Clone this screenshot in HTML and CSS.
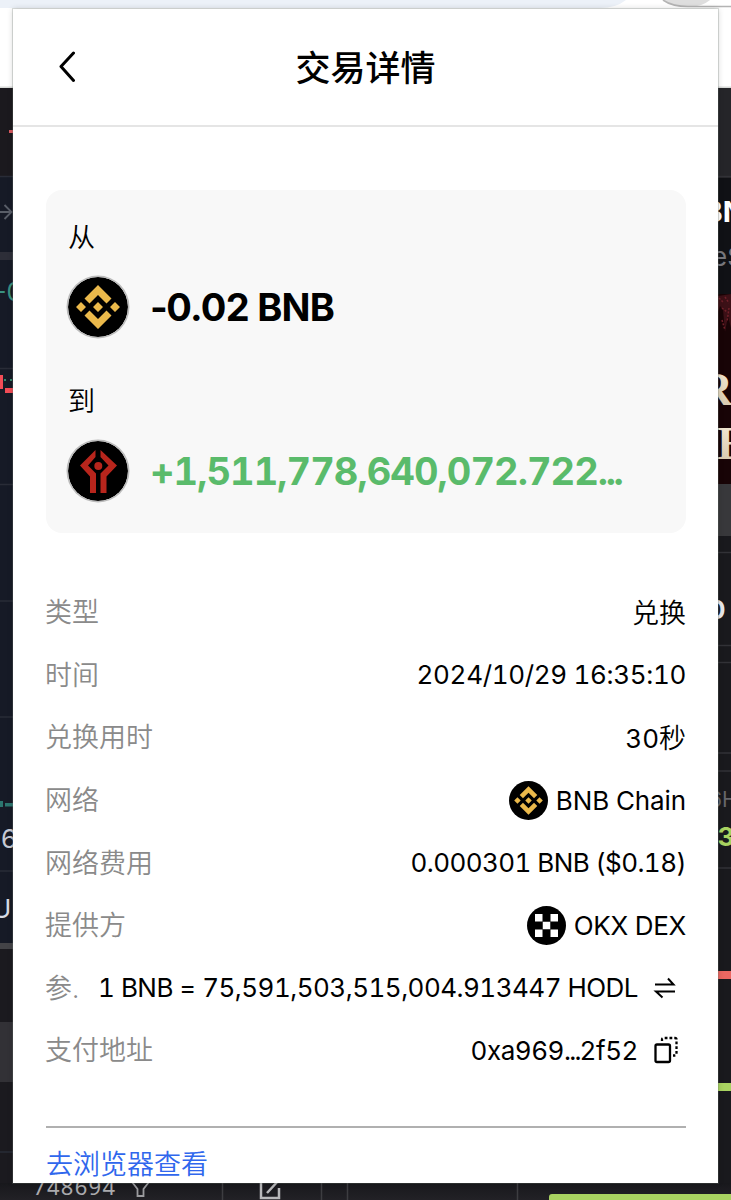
FILE: index.html
```html
<!DOCTYPE html>
<html lang="zh-CN">
<head>
<meta charset="utf-8">
<title>交易详情</title>
<link rel="stylesheet" href="styles.css">
</head>
<body>
<svg class="backdrop" width="731" height="1200" viewBox="0 0 731 1200" aria-hidden="true">
  <defs>
    <linearGradient id="bottom" x1="0" y1="0" x2="0" y2="1"><stop offset="0" stop-color="#18181c"/><stop offset="1" stop-color="#222126"/></linearGradient>
    <linearGradient id="cream" x1="0" y1="0" x2="0" y2="1"><stop offset="0" stop-color="#f7edd8"/><stop offset="1" stop-color="#d3c4a8"/></linearGradient>
  </defs>
  <rect width="731" height="88" fill="#fff"/>
  <path d="M0 0H626Q616 8 600 8H0Z" fill="#ecf1f8"/>
  <path d="M663 0Q672 7 688 7Q702 7 710 0Z" fill="#dedede"/>
  <path d="M663 0Q672 6.5 688 6.5H731" fill="none" stroke="#b4b4b4" stroke-width="1.6"/>
  <rect y="86.500" width="731" height="1.500" fill="#d8dad8"/>
  <rect y="88" width="731" height="1112" fill="#19191d"/>
  <g>
    <rect y="88" width="13" height="89" fill="#1b191e"/>
    <rect y="177" width="13" height="768" fill="#161a26"/>
    <rect y="948" width="13" height="252" fill="#1b1a1f"/>
    <path d="M0 176.500H13M0 368.500H13M0 484.500H13M0 601H13M0 717H13M0 871H13M0 1152H13" stroke="#292c37" stroke-width="1.500"/>
    <rect y="252" width="13" height="8" fill="#2d2e38"/>
    <rect y="943" width="13" height="6" fill="#434347"/>
    <rect y="1022" width="13" height="60" fill="#323136"/>
    <rect x="9" y="130" width="4" height="3" fill="#d9585f"/>
    <path d="M0 212H11M4.500 205L11.500 212L4.500 219" fill="none" stroke="#595e68" stroke-width="1.800"/>
    <text x="-5" y="301" font-size="25" fill="#399181">-0</text>
    <path d="M0 375H3V389H0ZM5 388H13V393H5Z" fill="#f34c56"/>
    <path d="M4 380H6M10 380H12" stroke="#3fae83" stroke-width="1.500"/>
    <path d="M0 801H3V807H0ZM5 803H13V806.500H5Z" fill="#2c766f"/>
    <text x="1" y="848" font-size="26" fill="#c6c9d3">6</text>
    <text x="-8" y="918" font-size="26" fill="#d8dbe4">U</text>
  </g>
  <g>
    <rect x="718" y="88" width="13" height="90" fill="#252529"/>
    <rect x="718" y="178" width="13" height="116" fill="#101115"/>
    <rect x="718" y="294" width="13" height="190" fill="#180406"/>
    <path d="M718 296L731 294V328L728 316L725 332L723 310L720 306L718 312Z" fill="#3c1016"/>
    <path d="M719 298L723 302M725 297L729 303M722 308L727 312M729 308L727 322M722 320L725 330" stroke="#702029" stroke-width="1.500" stroke-dasharray="2 1.500"/>
    <rect x="718" y="484" width="13" height="52" fill="#38383b"/>
    <path d="M718 176.500H731M718 552.500H731M718 645.500H731M718 662.500H731M718 753H731M718 771H731M718 868H731" stroke="#323237" stroke-width="1.500"/>
    <text x="703.500" y="222" font-size="29" font-weight="700" fill="#fff">BN</text>
    <text x="712" y="266" font-size="26" fill="#77777c">eS</text>
    <text class="poster" x="699" y="405" font-size="47" font-weight="700" fill="url(#cream)">R</text>
    <text class="poster" x="717" y="459" font-size="47" font-weight="700" fill="url(#cream)">E</text>
    <text x="708" y="619" font-size="26" font-weight="700" fill="#e8e8ec">0</text>
    <text x="709" y="807" font-size="21" fill="#66666b">6H</text>
    <text x="717.500" y="846" font-size="26" font-weight="700" fill="#a9d361">3</text>
    <rect x="718" y="971" width="13" height="8" fill="#ec6762"/>
    <rect x="718" y="1083" width="13" height="8" fill="#a9d361"/>
  </g>
  <rect y="1183" width="731" height="17" fill="url(#bottom)"/>
  <path d="M222.500 1183V1200M321.500 1183V1200M347.500 1183V1200M517.500 1183V1200" stroke="#3d3d41" stroke-width="1.500"/>
  <text class="mono" x="33" y="1195" font-size="22" textLength="82" fill="#aaaaad">748694</text>
  <path d="M132 1182L137.500 1189V1196H143.500V1189L149 1182" fill="none" stroke="#9b9b9e" stroke-width="1.800"/>
  <path d="M261 1180V1198H279V1188M267 1193L279 1180" fill="none" stroke="#b8b8ba" stroke-width="2.500"/>
  <path d="M549 1200V1197Q549 1194 552 1194H731V1200Z" fill="#a9d361"/>
</svg>

<svg class="symbols" width="0" height="0" aria-hidden="true">
  <symbol id="bnb" viewBox="0 0 60 60">
    <circle cx="30" cy="30" r="30" fill="#000"/>
    <path d="M30 8L43.500 21.500L38.500 26.500L30 18L21.500 26.500L16.500 21.500ZM30 52L43.500 38.500L38.500 33.500L30 42L21.500 33.500L16.500 38.500ZM30 25L35 30L30 35L25 30ZM13 25L18 30L13 35L8 30ZM47 25L52 30L47 35L42 30Z" fill="#ebb94b"/>
  </symbol>
</svg>

<main class="popup">
  <header class="header">
    <svg class="back" width="16" height="32" viewBox="0 0 16 32"><path d="M14.500 2L2 15.500L14.500 29.500" fill="none" stroke="#000" stroke-width="3" stroke-linecap="round" stroke-linejoin="round"/></svg>
    <h1 class="title">交易详情</h1>
  </header>

  <section class="swap">
    <div class="leg">
      <div class="leg-label">从</div>
      <div class="leg-value"><svg class="token"><use href="#bnb"/></svg><span class="amount spent"><span class="minus">-</span>0.02 BNB</span></div>
    </div>
    <div class="leg">
      <div class="leg-label">到</div>
      <div class="leg-value">
        <svg class="token" viewBox="0 0 60 60"><circle cx="30" cy="30" r="30" fill="#000"/><path d="M27.500 9L12 24.500L22 35.500V52H28V32.500L20 24.500L27.500 16ZM32.500 9L49 24.500L38.500 35.500V52H32.500V32.500L40.500 24.500L32.500 16Z" fill="#b8251c"/><circle cx="30.300" cy="25" r="4" fill="#b8251c"/></svg>
        <span class="amount received">+1,511,778,640,072.722<span class="dots">...</span></span>
      </div>
    </div>
  </section>

  <dl class="details">
    <div class="row"><dt>类型</dt><dd class="cjk">兑换</dd></div>
    <div class="row"><dt>时间</dt><dd><span class="time">2024/10/29 16:35:10</span></dd></div>
    <div class="row"><dt>兑换用时</dt><dd class="cjk"><span><span class="seconds">30</span>秒</span></dd></div>
    <div class="row"><dt>网络</dt><dd><svg class="logo"><use href="#bnb"/></svg><span class="chain">BNB Chain</span></dd></div>
    <div class="row"><dt>网络费用</dt><dd><span class="fee">0.000301 BNB ($0.18)</span></dd></div>
    <div class="row"><dt>提供方</dt><dd>
      <svg class="logo" viewBox="0 0 39 39"><circle cx="19.500" cy="19.500" r="19.500" fill="#000"/><path d="M8 8H15.500V15.500H8ZM23.500 8H31V15.500H23.500ZM15.750 15.750H23.250V23.250H15.750ZM8 23.500H15.500V31H8ZM23.500 23.500H31V31H23.500Z" fill="#fff"/></svg>
      <span class="dex">OKX DEX</span></dd></div>
    <div class="row"><dt>参.</dt><dd><span class="rate">1 BNB = 75,591,503,515,004.913447 HODL</span>
      <svg class="action" width="28" height="28" viewBox="0 0 28 28"><path d="M3 10.500H21.500L16 4.500M23 17.500H4L10.500 23.500" fill="none" stroke="#000" stroke-width="2"/></svg></dd></div>
    <div class="row"><dt>支付地址</dt><dd><span class="address">0xa969<span class="dots">...</span>2f52</span>
      <svg class="action" width="28" height="28" viewBox="0 0 28 28"><rect x="3.500" y="8.500" width="14.500" height="17.500" rx="1.500" fill="none" stroke="#000" stroke-width="2.300"/><path d="M10 5V3.500Q10 2 11.500 2H23Q24.500 2 24.500 3.500V18Q24.500 19.500 23 19.500H21" fill="none" stroke="#000" stroke-width="2.300" stroke-dasharray="2.800 2"/></svg></dd></div>
  </dl>
  <footer class="footer"><a class="explorer">去浏览器查看</a></footer>
</main>
</body>
</html>
```
FILE: styles.css
```css
* { box-sizing: border-box; }
body {
  margin: 0;
  height: 1200px;
  overflow: hidden;
  padding: 9px 13px 17px;
  font-family: Inter, "Noto Sans CJK SC", sans-serif;
  color: #000;
}
.backdrop { position: absolute; inset: 0; z-index: -1; }
.poster { font-family: "Liberation Serif", serif; }
.mono { font-family: "Noto Sans", sans-serif; }
.symbols { display: block; }
.popup {
  height: 1174px;
  background: #fff;
  box-shadow: 0 0 6px rgba(0, 0, 0, .18), 0 0 0 1px rgba(120, 130, 125, .25);
  overflow: hidden;
}
.header {
  height: 118px;
  border-bottom: 2px solid #e5e5e5;
  display: grid;
  grid-template-columns: 60px 1fr 60px;
  align-items: center;
}
.back { justify-self: end; margin-right: -2px; display: block; }
.title { margin: 0; padding-top: 2px; text-align: center; font-size: 35px; line-height: 50px; font-weight: 500; }
.swap {
  margin: 63px 32px 0 33px;
  height: 343px;
  padding: 30px 22px 28px;
  border-radius: 16px;
  background: #f8f8f8;
}
.leg { height: 164px; }
.leg-label { font-size: 27px; line-height: 36px; font-weight: 350; }
.leg-value { display: flex; align-items: center; height: 60px; margin-top: 21px; gap: 22px; }
.token { width: 60px; height: 60px; border-radius: 50%; box-shadow: 0 0 0 1.500px #bbb; flex: none; }
.amount { font-size: 38px; font-weight: 700; white-space: nowrap; }
.spent { letter-spacing: -.750px; }
.minus { letter-spacing: -1.500px; }
.received { color: #5abb6b; letter-spacing: -.950px; font-variant-numeric: tabular-nums; }
.received .dots { letter-spacing: -2.300px; }
.details { margin: 48px 32px 0 33px; }
.row { display: flex; justify-content: space-between; align-items: center; height: 62.600px; font-size: 26px; font-variant-numeric: tabular-nums; }
dt { color: #8a8a8a; white-space: nowrap; font-size: 27px; font-weight: 350; margin: -3px 0 0 -1px; }
dd { margin: 0; display: flex; align-items: center; gap: 8px; white-space: nowrap; }
.cjk { font-size: 27px; font-weight: 350; margin-top: -2px; }
.seconds { font-size: 26px; font-weight: 400; }
.time { letter-spacing: -.330px; }
.chain { letter-spacing: -.120px; }
.fee { letter-spacing: -.580px; }
.dex { letter-spacing: -.280px; }
.rate { letter-spacing: -.530px; }
.address { letter-spacing: -.450px; }
.address .dots { letter-spacing: -1.800px; }
.logo { width: 39px; height: 39px; flex: none; }
.action { margin: 0 6px; flex: none; }
.footer { margin: 44px 32px 0 33px; padding-top: 19px; border-top: 2px solid #b0b0b0; }
.explorer { display: block; color: #3067ed; font-size: 27px; line-height: 36px; font-weight: 350; }
```
